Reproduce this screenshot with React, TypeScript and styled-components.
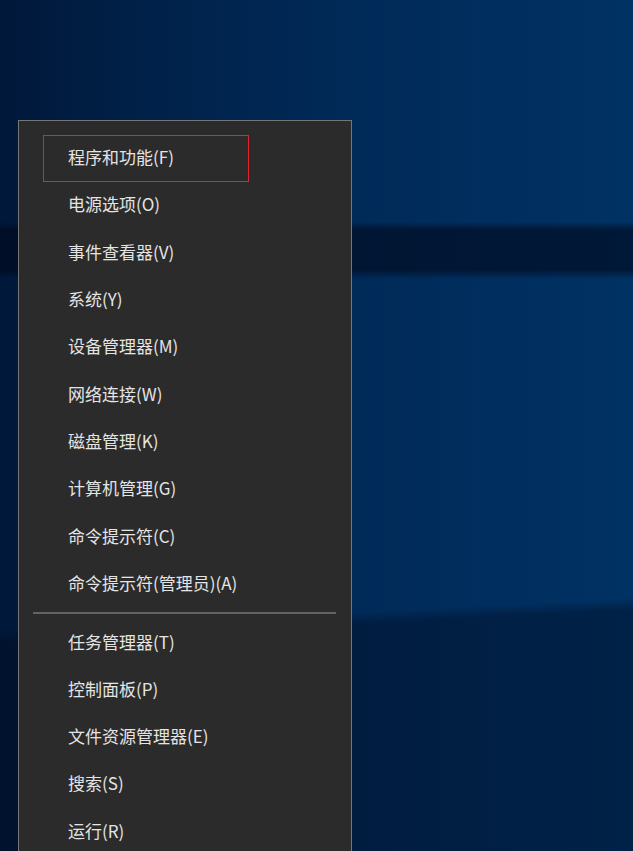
import styled, { createGlobalStyle } from "styled-components";

const GlobalStyle = createGlobalStyle`
  html, body {
    margin: 0;
    padding: 0;
  }
  body {
    font-family: "Noto Sans CJK SC", "Microsoft YaHei", "Noto Sans", sans-serif;
  }
`;

const Desktop = styled.div`
  width: 633px;
  height: 851px;
  overflow: hidden;
  box-sizing: border-box;
  padding: 120px 0 0 18px;
  background:
    linear-gradient(
      180deg,
      transparent 222px,
      rgba(0, 8, 26, 0.6) 230px,
      rgba(0, 8, 26, 0.6) 270px,
      transparent 279px
    ),
    linear-gradient(
      177deg,
      transparent 630px,
      rgba(0, 8, 26, 0.38) 642px
    ),
    linear-gradient(90deg, #00183a 0%, #00224a 25%, #002a58 55%, #003264 100%);
`;

const Menu = styled.div`
  width: 334px;
  box-sizing: border-box;
  background: #2b2b2b;
  border: 1px solid #767676;
  border-bottom: none;
  padding-top: 14px;
  height: 760px;
`;

const Item = styled.div<{ $boxed?: boolean }>`
  height: 47.3px;
  display: flex;
  align-items: center;
  box-sizing: border-box;
  padding-bottom: 4px;
  color: #e4e4e4;
  font-size: 17px;
  white-space: nowrap;
  padding-left: ${(p) => (p.$boxed ? "24px" : "49px")};
  margin-left: ${(p) => (p.$boxed ? "24px" : "0")};
  width: ${(p) => (p.$boxed ? "206px" : "auto")};
  border: ${(p) => (p.$boxed ? "1px solid #e0262d" : "none")};
`;

const Separator = styled.div`
  height: 2px;
  background: #626262;
  margin: 4px 15px 5.4px 14px;
`;

const topItems = [
  "程序和功能(F)",
  "电源选项(O)",
  "事件查看器(V)",
  "系统(Y)",
  "设备管理器(M)",
  "网络连接(W)",
  "磁盘管理(K)",
  "计算机管理(G)",
  "命令提示符(C)",
  "命令提示符(管理员)(A)",
];

const bottomItems = [
  "任务管理器(T)",
  "控制面板(P)",
  "文件资源管理器(E)",
  "搜索(S)",
  "运行(R)",
];

const App = () => {
  return (
    <>
      <GlobalStyle />
      <Desktop>
        <Menu>
          {topItems.map((label, i) => (
            <Item key={label} $boxed={i === 0}>
              {label}
            </Item>
          ))}
          <Separator />
          {bottomItems.map((label) => (
            <Item key={label}>{label}</Item>
          ))}
        </Menu>
      </Desktop>
    </>
  );
};

export default App;
